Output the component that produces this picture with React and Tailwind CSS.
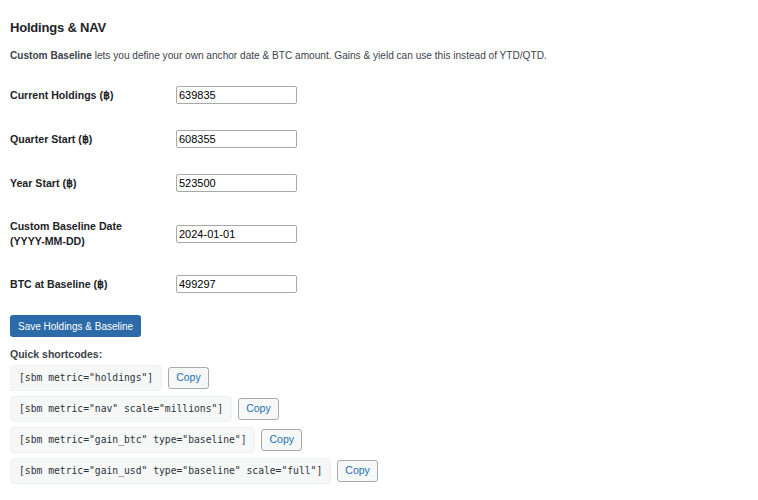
const FIELDS = [
  { label: 'Current Holdings (฿)', value: '639835' },
  { label: 'Quarter Start (฿)', value: '608355' },
  { label: 'Year Start (฿)', value: '523500' },
  { label: ['Custom Baseline Date', '(YYYY-MM-DD)'], value: '2024-01-01' },
  { label: 'BTC at Baseline (฿)', value: '499297' },
]

const SHORTCODES = [
  '[sbm metric="holdings"]',
  '[sbm metric="nav" scale="millions"]',
  '[sbm metric="gain_btc" type="baseline"]',
  '[sbm metric="gain_usd" type="baseline" scale="full"]',
]

export default function App() {
  return (
    <div className="min-h-[500px] bg-white px-[10px] pt-[19px] text-[#1d2327] font-['Liberation_Sans',Arial,sans-serif]">
      <h2 className="text-[13px] leading-[18px] font-bold tracking-[-0.2px]">Holdings &amp; NAV</h2>

      <p className="mt-[12px] text-[10.1px] leading-[14px] text-[#3c434a]">
        <strong className="font-bold">Custom Baseline</strong> lets you define your own anchor date &amp; BTC amount. Gains &amp; yield can use this instead of YTD/QTD.
      </p>

      {/* form rows */}
      <div className="mt-[10px]">
        {FIELDS.map((f, i) => (
          <div key={i} className={`flex items-center ${Array.isArray(f.label) ? 'py-[13.5px]' : 'py-[13px]'}`}>
            <div className="w-[166px] text-[10.6px] leading-[15px] font-bold">
              {Array.isArray(f.label) ? f.label.map(l => <div key={l}>{l}</div>) : f.label}
            </div>
            <input
              readOnly
              value={f.value}
              className="h-[18px] w-[121px] border border-[#a7aaad] rounded-[2px] px-[2px] text-[11px] text-black outline-none"
            />
          </div>
        ))}
      </div>

      <button className="mt-[9px] h-[22px] px-[8px] rounded-[3px] bg-[#2c6aa8] text-white text-[10px]">
        Save Holdings &amp; Baseline
      </button>

      <div className="mt-[10px] text-[10.5px] leading-[14px] font-bold text-[#3c434a]">Quick shortcodes:</div>

      <div className="mt-[4px] flex flex-col gap-[5px]">
        {SHORTCODES.map(code => (
          <div key={code} className="flex items-center gap-[6px]">
            <code className="h-[26px] flex items-center px-[8px] rounded-[4px] bg-[#f6f7f7] border border-[#f0f0f1] text-[9.7px] text-[#2c3338] font-['DejaVu_Sans_Mono',monospace] whitespace-pre">
              {code}
            </code>
            <button className="h-[22px] px-[7px] rounded-[3px] border border-[#a7aaad] bg-[#f6f7f7] text-[#2271b1] text-[10.5px]">
              Copy
            </button>
          </div>
        ))}
      </div>
    </div>
  )
}
